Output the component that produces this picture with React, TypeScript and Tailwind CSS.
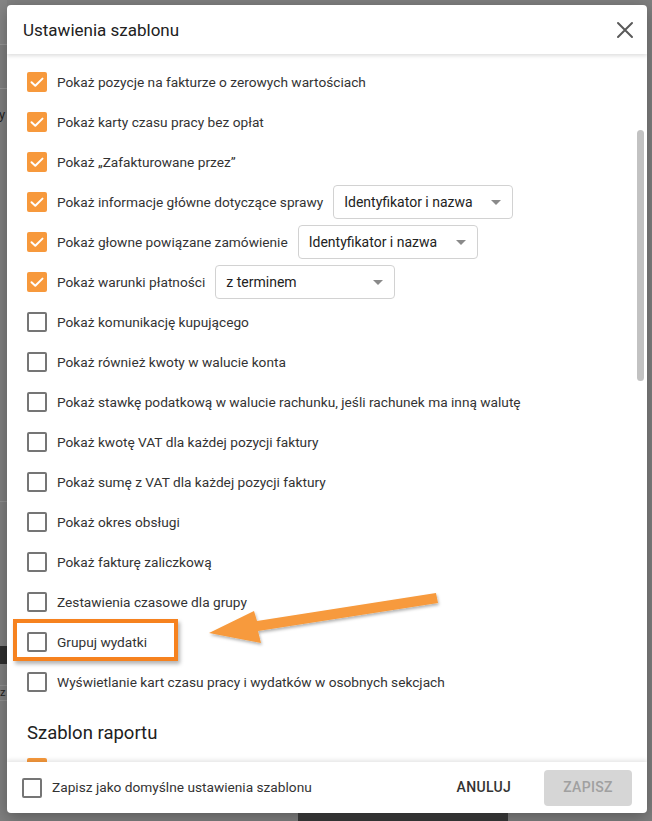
import React from "react";

const FONT = { fontFamily: "Roboto, 'Noto Sans', sans-serif" };

function Check({ checked }: { checked: boolean }) {
  if (checked) {
    return (
      <div className="w-[20px] h-[20px] rounded-[2px] bg-[#f7993c] flex items-center justify-center shrink-0">
        <svg width="20" height="20" viewBox="0 0 20 20">
          <polyline points="4.5,10.2 8.3,13.8 15.5,6.6" fill="none" stroke="#ffffff" strokeWidth="2" strokeLinecap="round" strokeLinejoin="round" />
        </svg>
      </div>
    );
  }
  return <div className="w-[20px] h-[20px] rounded-[2px] border-2 border-[#757575] bg-white shrink-0" />;
}

function Select({ value }: { value: string }) {
  return (
    <div className="ml-[10px] w-[180px] h-[34px] border border-[#d2d2d2] rounded-[4px] flex items-center justify-between pl-[10px] pr-[11px] text-[14px] text-[#222]">
      <span>{value}</span>
      <div className="w-0 h-0 border-l-[5px] border-r-[5px] border-t-[5px] border-l-transparent border-r-transparent border-t-[#8a8a8a]" />
    </div>
  );
}

const rows: { label: string; checked: boolean; select?: string }[] = [
  { label: "Pokaż pozycje na fakturze o zerowych wartościach", checked: true },
  { label: "Pokaż karty czasu pracy bez opłat", checked: true },
  { label: "Pokaż „Zafakturowane przez”", checked: true },
  { label: "Pokaż informacje główne dotyczące sprawy", checked: true, select: "Identyfikator i nazwa" },
  { label: "Pokaż głowne powiązane zamówienie", checked: true, select: "Identyfikator i nazwa" },
  { label: "Pokaż warunki płatności", checked: true, select: "z terminem" },
  { label: "Pokaż komunikację kupującego", checked: false },
  { label: "Pokaż również kwoty w walucie konta", checked: false },
  { label: "Pokaż stawkę podatkową w walucie rachunku, jeśli rachunek ma inną walutę", checked: false },
  { label: "Pokaż kwotę VAT dla każdej pozycji faktury", checked: false },
  { label: "Pokaż sumę z VAT dla każdej pozycji faktury", checked: false },
  { label: "Pokaż okres obsługi", checked: false },
  { label: "Pokaż fakturę zaliczkową", checked: false },
  { label: "Zestawienia czasowe dla grupy", checked: false },
  { label: "Grupuj wydatki", checked: false },
  { label: "Wyświetlanie kart czasu pracy i wydatków w osobnych sekcjach", checked: false },
];

export default function App() {
  return (
    <div className="relative w-[652px] h-[821px] bg-[#7f7f7f] overflow-hidden" style={FONT}>
      <div className="flex h-full">
        {/* background page edge, mostly hidden by the dialog */}
        <div className="w-[7px] shrink-0 flex flex-col text-[13px] text-[#222] overflow-hidden">
          <div className="h-[44px] bg-[#858585]" />
          <div className="h-px bg-[#959595]" />
          <div className="h-[43px]" />
          <div className="h-px bg-[#959595]" />
          <div className="h-[16px]" />
          <div className="h-[20px] leading-[20px] -ml-[1px]">y</div>
          <div className="h-[376px]" />
          <div className="h-px bg-[#909090]" />
          <div className="h-[144px]" />
          <div className="h-[18px] bg-[#2e2e2e]" />
          <div className="h-[21px]" />
          <div className="h-px bg-[#909090]" />
          <div className="h-[14px] leading-[14px] text-[11px]">z</div>
          <div className="h-px bg-[#909090]" />
        </div>

        <div className="flex flex-col">
          <div className="h-[5px] shrink-0" />
          {/* dialog */}
          <div className="w-[640px] h-[808px] bg-white rounded-[4px] flex flex-col overflow-hidden shadow-[0_4px_16px_rgba(0,0,0,0.3)]">
            <div className="relative z-10 h-[49px] shrink-0 flex items-center justify-between pl-[16px] pr-[13px] shadow-[0_2px_4px_rgba(0,0,0,0.13)]">
              <span className="text-[17px] text-[#212121] pt-[2px]">Ustawienia szablonu</span>
              <svg width="18" height="18" viewBox="0 0 18 18">
                <path d="M2 2 L16 16 M16 2 L2 16" stroke="#5a5a5a" strokeWidth="2" strokeLinecap="round" />
              </svg>
            </div>

            <div className="flex-1 flex overflow-hidden">
              <div className="flex-1 flex flex-col pl-[20px] pt-[8px] text-[13.7px] text-[#333]">
                {rows.map((r, i) => (
                  <div key={i} className="h-[40px] flex items-center shrink-0">
                    <Check checked={r.checked} />
                    <span className="ml-[10px] whitespace-nowrap">{r.label}</span>
                    {r.select && <Select value={r.select} />}
                  </div>
                ))}
                <div className="mt-[19px] h-[24px] leading-[24px] text-[18.5px] text-[#212121] shrink-0">Szablon raportu</div>
                <div className="mt-[13px] shrink-0">
                  <Check checked={true} />
                </div>
              </div>
              <div className="w-[7px] mr-[3px] shrink-0 flex flex-col pt-[76px]">
                <div className="h-[251px] rounded-full bg-[#c2c2c2]" />
              </div>
            </div>

            <div className="relative z-10 h-[51px] shrink-0 flex items-center pl-[15px] pr-[15px] shadow-[0_-2px_4px_rgba(0,0,0,0.1)]">
              <Check checked={false} />
              <span className="ml-[10px] text-[13.7px] text-[#333]">Zapisz jako domyślne ustawienia szablonu</span>
              <span className="ml-auto text-[14px] font-medium text-[#333] tracking-[0.3px]">ANULUJ</span>
              <div className="ml-[33px] w-[88px] h-[36px] rounded-[4px] bg-[#d6d6d6] flex items-center justify-center text-[14px] font-medium text-[#a0a0a0] tracking-[0.3px]">
                ZAPISZ
              </div>
            </div>
          </div>
          <div className="ml-[291px] w-[210px] h-[8px] bg-[#323232]" />
        </div>
      </div>

      {/* annotation: highlight box */}
      <div className="absolute left-[13px] top-[619px] w-[165px] h-[42px] border-[4px] border-[#f6821f] shadow-[2px_3px_4px_rgba(0,0,0,0.3)]" />
      {/* annotation: arrow */}
      <svg className="absolute left-0 top-0" width="652" height="821" viewBox="0 0 652 821">
        <defs>
          <filter id="sh" x="-10%" y="-50%" width="120%" height="200%">
            <feDropShadow dx="1" dy="2" stdDeviation="1.5" floodColor="#000" floodOpacity="0.3" />
          </filter>
        </defs>
        <polygon
          points="436,593 257,621 254,611 209,633 261,643 258,631 438,603"
          fill="#f79a3c"
          filter="url(#sh)"
        />
      </svg>
    </div>
  );
}
